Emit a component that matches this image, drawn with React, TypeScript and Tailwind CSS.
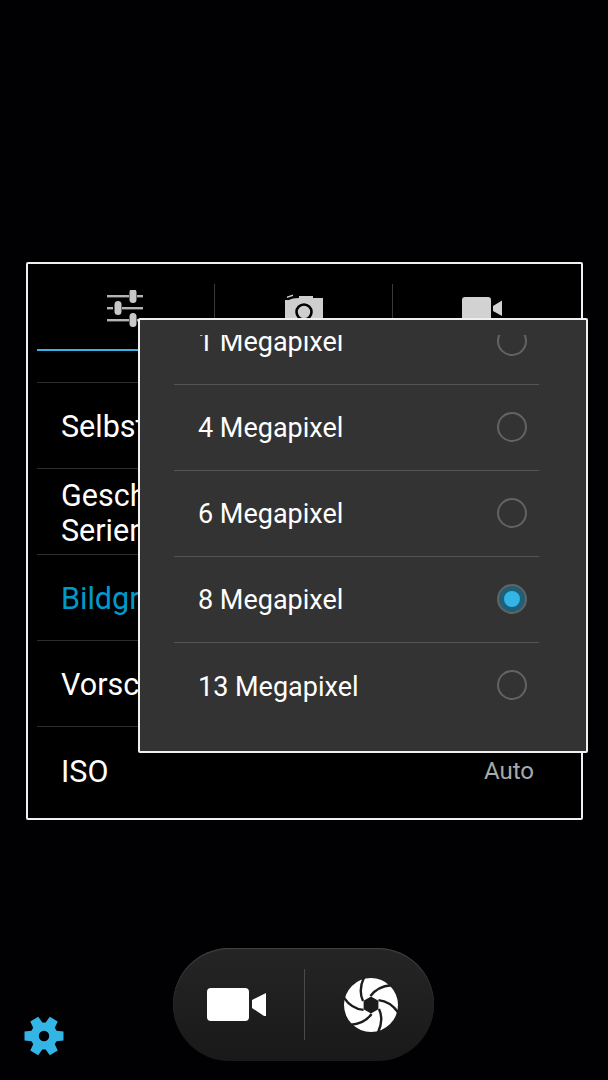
import React from "react";

const rows = [
  { id: "focus", label: ["Fokusmodus"], value: "Auto", offset: true },
  { id: "timer", label: ["Selbstauslöser"], value: "Aus" },
  { id: "speed", label: ["Geschwindigkeit/", "Serienaufnahme"], value: "Aus" },
  { id: "size", label: ["Bildgröße"], value: "8 MP", active: true },
  { id: "preview", label: ["Vorschaugröße"], value: "Standard" },
  { id: "iso", label: ["ISO"], value: "Auto", last: true },
];

const sizes = ["1 Megapixel", "4 Megapixel", "6 Megapixel", "8 Megapixel", "13 Megapixel"];

function SlidersIcon() {
  return (
    <svg width="40" height="40" viewBox="0 0 40 40" className="block">
      <g fill="#b4b4b4">
        <rect x="1" y="5" width="22" height="2.4" />
        <rect x="31" y="5" width="6" height="2.4" />
        <rect x="1" y="17" width="6" height="2.4" />
        <rect x="16" y="17" width="21" height="2.4" />
        <rect x="1" y="29" width="22" height="2.4" />
        <rect x="31" y="29" width="6" height="2.4" />
      </g>
      <g fill="#c8c8c8">
        <rect x="23.5" y="-1" width="7" height="14" rx="3.5" />
        <rect x="8.5" y="11" width="7" height="14" rx="3.5" />
        <rect x="23.5" y="23" width="7" height="14" rx="3.5" />
      </g>
    </svg>
  );
}

function CameraIcon() {
  return (
    <svg width="40" height="34" viewBox="0 0 40 34" className="block">
      <path d="M1 10 V33 H39 V8 H29 V6 H15 V8 Q8 8 5 10 Z" fill="#cecece" />
      <path d="M3 8 L9 6 V4.5 L3 6.5 Z" fill="#cecece" />
      <circle cx="20" cy="22" r="7.5" fill="#cecece" stroke="#000" strokeWidth="2.6" />
    </svg>
  );
}

function TabVideoIcon() {
  return (
    <svg width="42" height="24" viewBox="0 0 42 24" className="block">
      <rect x="1" y="0" width="29" height="24" rx="3" fill="#d2d2d2" />
      <path d="M32 9 L41 3.5 V19 L32 14 Z" fill="#d2d2d2" />
    </svg>
  );
}

function VideoIcon() {
  return (
    <svg width="60" height="34" viewBox="0 0 60 34" className="block">
      <rect x="0" y="0" width="42" height="33" rx="4" fill="#fff" />
      <path d="M45 12 L59 5 V28 H57 L45 20 Z" fill="#fff" />
    </svg>
  );
}

function ShutterIcon() {
  const angles = [0, 60, 120, 180, 240, 300];
  return (
    <svg width="56" height="56" viewBox="-28 -28 56 56" className="block">
      <circle r="27" fill="#fff" />
      <polygon points="0,-8.5 7.4,-4.2 7.4,4.2 0,8.5 -7.4,4.2 -7.4,-4.2" fill="#1c1c1c" />
      {angles.map((a) => (
        <path
          key={a}
          d="M-7 -27.5 Q-13 -15 -8 -4"
          fill="none"
          stroke="#1c1c1c"
          strokeWidth="2.4"
          transform={`rotate(${a})`}
        />
      ))}
    </svg>
  );
}

function GearIcon() {
  const angles = [0, 60, 120, 180, 240, 300];
  return (
    <svg width="40" height="40" viewBox="-20 -20 40 40" className="block">
      <circle r="13.5" fill="#33b5e5" />
      {angles.map((a) => (
        <path key={a} d="M-5.5 -10 L-4.6 -19.5 H4.6 L5.5 -10 Z" fill="#33b5e5" transform={`rotate(${a + 30})`} />
      ))}
      <circle r="5.2" fill="#010103" />
    </svg>
  );
}

function Radio({ checked }: { checked: boolean }) {
  return (
    <span
      className={`mb-[2px] flex h-[30px] w-[30px] shrink-0 items-center justify-center rounded-full border-2 border-[#636363] ${
        checked ? "bg-[#1f5f78]" : ""
      }`}
    >
      {checked && <span className="h-[16px] w-[16px] rounded-full bg-[#33b5e5]" />}
    </span>
  );
}

export default function App() {
  return (
    <div
      className="relative h-[1080px] w-[608px] overflow-hidden bg-[#010103] pt-[262px]"
      style={{ fontFamily: "Roboto, sans-serif" }}
    >
      <div className="ml-[26px] h-[558px] w-[557px] overflow-hidden rounded-[2px] border-2 border-[#f0f0f0] bg-black px-[9px]">
        <div className="flex h-[85px] items-start">
          {[
            { icon: <SlidersIcon />, pad: "pt-[26px]" },
            { icon: <CameraIcon />, pad: "pt-[26px]" },
            { icon: <TabVideoIcon />, pad: "pt-[33px]" },
          ].map((t, i) => (
            <div key={i} className={`relative flex h-[85px] w-[178px] items-start justify-center ${t.pad}`}>
              {t.icon}
              {i < 2 && <span className="absolute right-0 top-[20px] h-[40px] w-px bg-[#3a3a3a]" />}
            </div>
          ))}
        </div>
        <div className="h-[2px] w-[178px] bg-[#33b5e5]" />
        <div className="h-[465px] overflow-hidden">
          {rows.map((r) => (
            <div
              key={r.id}
              className={`flex h-[86px] items-center justify-between pl-[24px] pr-[38px] ${
                r.offset ? "mt-[-54px]" : ""
              } ${r.last ? "" : "border-b border-[#2c2c2c]"}`}
            >
              <span
                className={`pt-[2px] text-[30.5px] leading-[35px] ${r.active ? "text-[#0099cc]" : "text-white"}`}
              >
                {r.label.map((l) => (
                  <span key={l} className="block">
                    {l}
                  </span>
                ))}
              </span>
              <span className="pt-[2px] text-[24px] text-[#a8a8a8]">{r.value}</span>
            </div>
          ))}
        </div>
      </div>

      <div className="absolute left-[138px] top-[318px] h-[435px] w-[450px] rounded-[2px] border-2 border-[#f0f0f0] bg-[#333333] pb-[18px] pt-[15px] pl-[34px] pr-[47px]">
        <div className="h-[400px] overflow-hidden">
          {sizes.map((s, i) => (
            <div
              key={s}
              className={`flex h-[86px] items-center justify-between pl-[24px] pr-[12px] ${
                i === 0 ? "mt-[-36px]" : ""
              } ${i < 4 ? "border-b border-[#555555]" : ""}`}
            >
              <span className="pt-[2px] text-[27px] text-white">{s}</span>
              <Radio checked={s === "8 Megapixel"} />
            </div>
          ))}
        </div>
      </div>

      <div className="mt-[128px] flex items-start">
        <div className="ml-[24px] mt-[68px]">
          <GearIcon />
        </div>
        <div className="ml-[109px] flex h-[113px] w-[261px] items-center rounded-full bg-gradient-to-b from-[#252525] to-[#191919] shadow-[inset_0_1px_1px_#444444]">
          <div className="flex w-[131px] justify-end pr-[37px]">
            <VideoIcon />
          </div>
          <div className="h-[71px] w-px bg-[#4a4a4a]" />
          <div className="flex flex-1 justify-start pl-[38px]">
            <ShutterIcon />
          </div>
        </div>
      </div>
    </div>
  );
}
